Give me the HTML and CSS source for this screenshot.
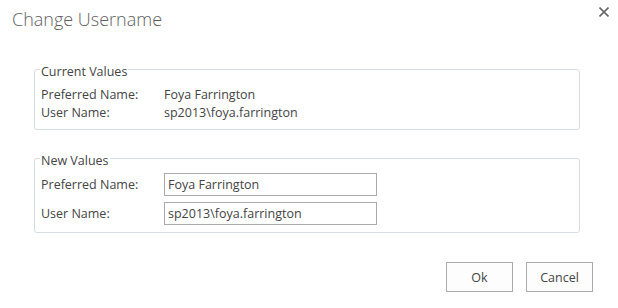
FILE: index.html
```html
<!DOCTYPE html>
<html lang="en">
<head>
<meta charset="utf-8">
<title>Change Username</title>
<link rel="stylesheet" href="styles.css">
</head>
<body>
<div class="dialog">
  <header class="dialog-header">
    <h1 class="dialog-title">Change Username</h1>
    <button class="close-btn" type="button" aria-label="Close">
      <svg width="10" height="10" viewBox="0 0 10 10"><path d="M0.5 0.5 L9.5 9.5 M9.5 0.5 L0.5 9.5" stroke="#666" stroke-width="1.6" fill="none"/></svg>
    </button>
  </header>
  <div class="dialog-body">
    <fieldset class="group group-current">
      <legend class="group-legend">Current Values</legend>
      <div class="row">
        <span class="label">Preferred Name:</span>
        <span class="value">Foya Farrington</span>
      </div>
      <div class="row">
        <span class="label">User Name:</span>
        <span class="value">sp2013\foya.farrington</span>
      </div>
    </fieldset>
    <fieldset class="group group-new">
      <legend class="group-legend">New Values</legend>
      <div class="row row-input">
        <label class="label" for="pn">Preferred Name:</label>
        <input class="text-input" id="pn" type="text" value="Foya Farrington">
      </div>
      <div class="row row-input">
        <label class="label" for="un">User Name:</label>
        <input class="text-input" id="un" type="text" value="sp2013\foya.farrington">
      </div>
    </fieldset>
  </div>
  <footer class="dialog-footer">
    <button class="btn" type="button">Ok</button>
    <button class="btn" type="button">Cancel</button>
  </footer>
</div>
</body>
</html>
```
FILE: styles.css
```css
html, body {
  margin: 0;
  padding: 0;
  background: #ffffff;
}
body {
  font-family: "Open Sans", "Noto Sans", "Liberation Sans", sans-serif;
  font-size: 12.5px;
  color: #444444;
  width: 618px;
  height: 308px;
  overflow: hidden;
}
.dialog {
  display: flex;
  flex-direction: column;
}
.dialog-header {
  display: flex;
  justify-content: space-between;
  align-items: flex-start;
  padding: 7px 9px 0 12px;
}
.dialog-title {
  margin: 0;
  font-size: 18px;
  font-weight: 300;
  line-height: 24px;
  color: #5f5f5f;
}
.close-btn {
  border: 0;
  background: transparent;
  padding: 0;
  margin: 0;
  width: 10px;
  height: 10px;
  display: block;
}
.close-btn svg {
  display: block;
}
.dialog-body {
  padding: 28px 38px 0 34px;
  display: flex;
  flex-direction: column;
  gap: 18px;
}
.group {
  margin: 0;
  border: 1px solid #d6dce2;
  border-radius: 3px;
  padding: 6px 5px 7px 5px;
  min-width: 0;
}
.group-new {
  padding-top: 4px;
}
.group-legend {
  padding: 5px 1px 0 1px;
  margin: 0;
  line-height: 16px;
  font-size: 12.5px;
  color: #444444;
}
.row {
  display: flex;
  align-items: center;
  line-height: 18px;
}
.label {
  width: 124px;
  flex: none;
  padding-left: 1px;
  box-sizing: border-box;
}
.row-input + .row-input {
  margin-top: 6px;
}
.text-input {
  box-sizing: border-box;
  width: 213px;
  height: 23px;
  border: 1px solid #ababab;
  padding: 0 3px;
  margin: 0;
  font-family: inherit;
  font-size: 12.5px;
  color: #444444;
  background: #ffffff;
  outline: none;
}
.dialog-footer {
  display: flex;
  justify-content: flex-end;
  gap: 13px;
  padding: 29px 25px 0 0;
}
.btn {
  box-sizing: border-box;
  width: 67px;
  height: 30px;
  border: 1px solid #ababab;
  background: #fdfdfd;
  font-family: inherit;
  font-size: 12.5px;
  color: #444444;
  padding: 0;
  margin: 0;
}
```
